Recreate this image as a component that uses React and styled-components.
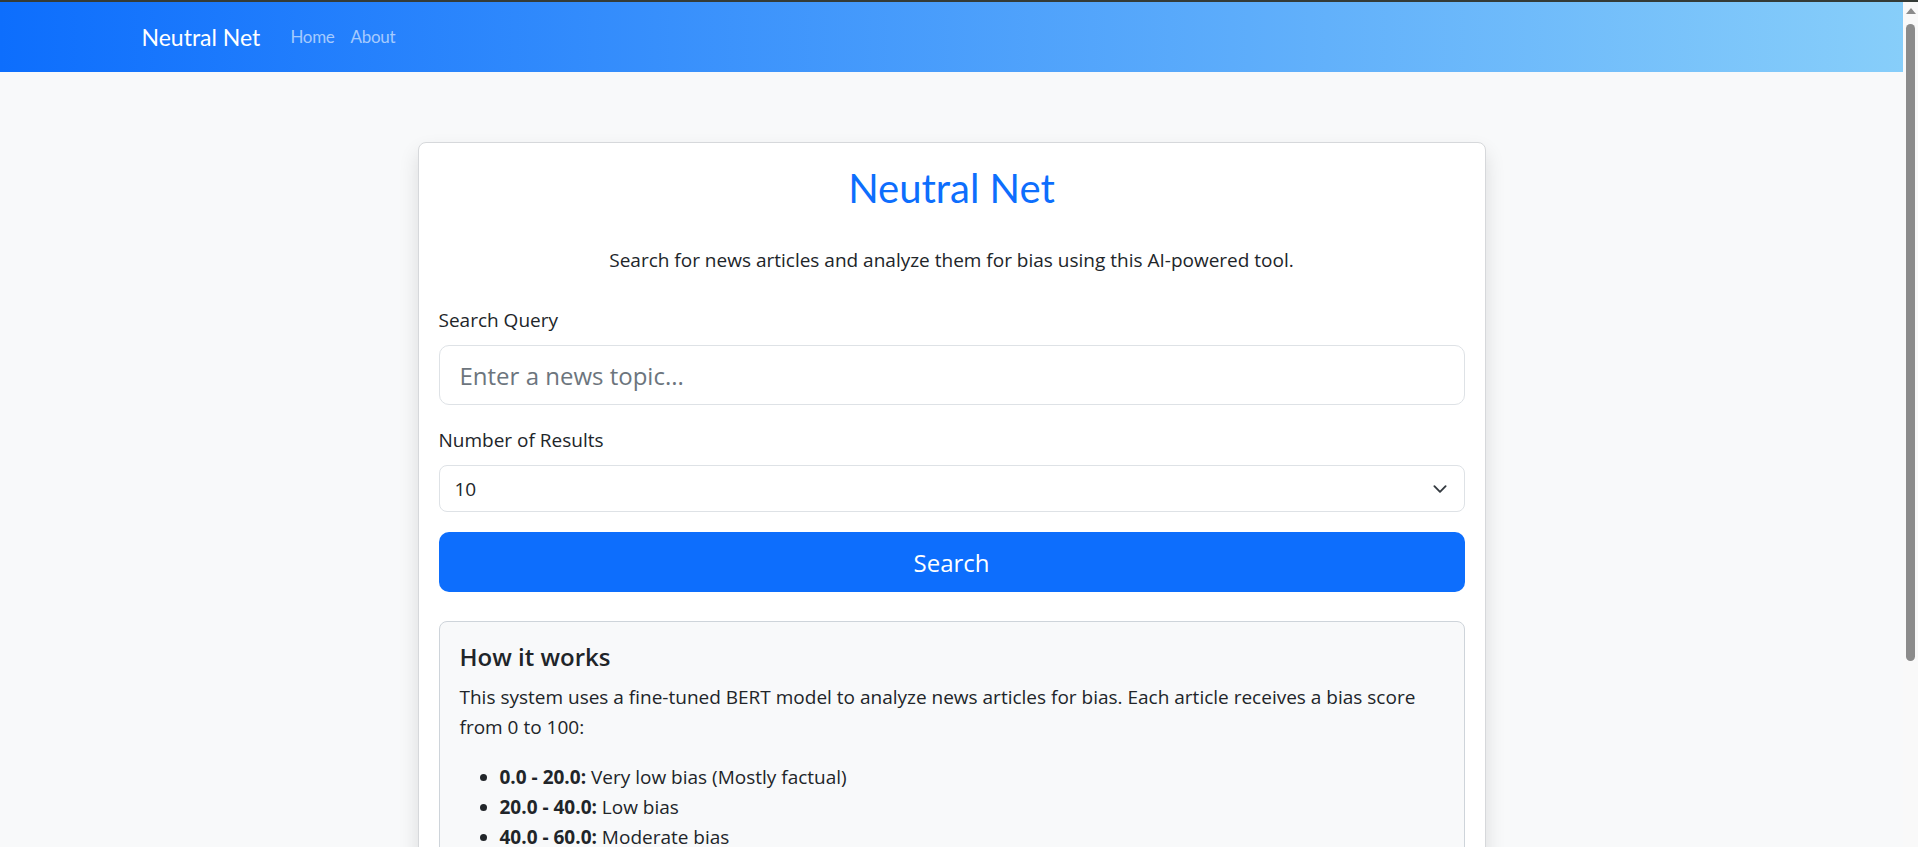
import React, { useState } from 'react';
import styled, { createGlobalStyle } from 'styled-components';

const GlobalStyle = createGlobalStyle`
    * {
        box-sizing: border-box;
    }
    html, body {
        margin: 0;
        padding: 0;
        overflow: hidden;
    }
    body {
        background-color: #f8f9fa;
        color: #212529;
        font-family: 'Segoe UI', 'Open Sans', 'Noto Sans', sans-serif;
        font-size: 19px;
        line-height: 30px;
    }
`;

const Window = styled.div`
    display: flex;
    height: 100vh;
    border-top: 2px solid #343b37;
`;

const Viewport = styled.div`
    flex: 1;
    min-width: 0;
    overflow-y: auto;
    scrollbar-width: none;

    &::-webkit-scrollbar {
        display: none;
    }
`;

const ScrollRail = styled.div`
    width: 15px;
    flex-shrink: 0;
    background: #f9f9f9;
    display: flex;
    flex-direction: column;
    align-items: center;
    padding-top: 6px;
`;

const ScrollArrow = styled.div`
    width: 0;
    height: 0;
    border-left: 5px solid transparent;
    border-right: 5px solid transparent;
    border-bottom: 6px solid #8b8b8b;
    margin-bottom: 10px;
`;

const ScrollThumb = styled.div`
    width: 9px;
    height: 637px;
    border-radius: 5px;
    background: #8b8b8b;
`;

const Navbar = styled.nav`
    height: 70px;
    background: linear-gradient(90deg, #0d6efd 0%, #87cefa 100%);
    display: flex;
    align-items: center;
`;

const NavInner = styled.div`
    width: 1650px;
    margin: 0 auto;
    padding: 0 15px;
    display: flex;
    align-items: center;
`;

const Brand = styled.a`
    font-family: 'Lato', sans-serif;
    font-size: 23px;
    color: #ffffff;
    margin-right: 22px;
    text-decoration: none;
`;

const NavLink = styled.a`
    font-family: 'Lato', sans-serif;
    font-size: 17px;
    letter-spacing: -0.3px;
    color: rgba(255, 255, 255, 0.6);
    padding: 0 8px;
    text-decoration: none;
`;

const Main = styled.main`
    display: flex;
    justify-content: center;
    padding: 70px 0 140px;
`;

const Card = styled.div`
    width: 1068px;
    background: #ffffff;
    border: 1px solid #d6d8db;
    border-radius: 8px;
    box-shadow: 0 10px 20px rgba(0, 0, 0, 0.12);
    padding: 20px;
`;

const Title = styled.h1`
    font-family: 'Lato', sans-serif;
    font-weight: 400;
    font-size: 40px;
    line-height: 48px;
    color: #0d6efd;
    text-align: center;
    margin: 1px 0 33px;
`;

const Intro = styled.p`
    text-align: center;
    margin: 0 0 30px;
`;

const Field = styled.div`
    margin-bottom: 20px;
`;

const Label = styled.label`
    display: block;
    margin-bottom: 10px;
`;

const TextInput = styled.input`
    display: block;
    width: 100%;
    height: 60px;
    padding: 10px 20px;
    font-family: inherit;
    font-size: 24px;
    color: #212529;
    background: #ffffff;
    border: 1px solid #dee2e6;
    border-radius: 10px;
    outline: none;

    &::placeholder {
        color: #6c757d;
    }
`;

const SelectWrap = styled.div`
    position: relative;
`;

const Select = styled.select`
    display: block;
    width: 100%;
    height: 47px;
    padding: 7px 45px 7px 15px;
    font-family: inherit;
    font-size: 19px;
    color: #212529;
    background: #ffffff;
    border: 1px solid #dee2e6;
    border-radius: 8px;
    appearance: none;
    outline: none;
`;

const Chevron = styled.svg`
    position: absolute;
    right: 15px;
    top: 50%;
    transform: translateY(-50%);
    pointer-events: none;
`;

const SearchButton = styled.button`
    display: block;
    width: 100%;
    height: 60px;
    font-family: inherit;
    font-size: 24px;
    color: #ffffff;
    background: #0d6efd;
    border: none;
    border-radius: 10px;
    cursor: pointer;
`;

const InfoBox = styled.div`
    margin-top: 29px;
    background: #f8f9fa;
    border: 1px solid #ced4da;
    border-radius: 8px;
    padding: 20px;
`;

const InfoTitle = styled.h5`
    font-size: 24px;
    font-weight: 600;
    line-height: 30px;
    margin: 0 0 10px;
`;

const InfoText = styled.p`
    margin: 0 0 20px;
`;

const List = styled.ul`
    margin: 0 0 20px;
    padding-left: 40px;
`;

const ranges = [
    ['0.0 - 20.0:', 'Very low bias (Mostly factual)'],
    ['20.0 - 40.0:', 'Low bias'],
    ['40.0 - 60.0:', 'Moderate bias'],
    ['60.0 - 80.0:', 'High bias'],
    ['80.0 - 100.0:', 'Very high bias (Mostly opinion)'],
];

export default function App() {
    const [query, setQuery] = useState('');
    const [count, setCount] = useState('10');

    return (
        <>
            <GlobalStyle />
            <Window>
                <Viewport>
                    <Navbar>
                        <NavInner>
                            <Brand href="#">Neutral Net</Brand>
                            <NavLink href="#">Home</NavLink>
                            <NavLink href="#">About</NavLink>
                        </NavInner>
                    </Navbar>
                    <Main>
                        <Card>
                            <Title>Neutral Net</Title>
                            <Intro>
                                Search for news articles and analyze them for bias using this AI-powered tool.
                            </Intro>
                            <Field>
                                <Label htmlFor="query">Search Query</Label>
                                <TextInput
                                    id="query"
                                    placeholder="Enter a news topic..."
                                    value={query}
                                    onChange={(e) => setQuery(e.target.value)}
                                />
                            </Field>
                            <Field>
                                <Label htmlFor="count">Number of Results</Label>
                                <SelectWrap>
                                    <Select id="count" value={count} onChange={(e) => setCount(e.target.value)}>
                                        <option value="5">5</option>
                                        <option value="10">10</option>
                                        <option value="20">20</option>
                                        <option value="50">50</option>
                                    </Select>
                                    <Chevron width="20" height="15" viewBox="0 0 16 16">
                                        <path
                                            d="m2 5 6 6 6-6"
                                            fill="none"
                                            stroke="#343a40"
                                            strokeWidth="2"
                                            strokeLinecap="round"
                                            strokeLinejoin="round"
                                        />
                                    </Chevron>
                                </SelectWrap>
                            </Field>
                            <SearchButton>Search</SearchButton>
                            <InfoBox>
                                <InfoTitle>How it works</InfoTitle>
                                <InfoText>
                                    This system uses a fine-tuned BERT model to analyze news articles for bias. Each
                                    article receives a bias score from 0 to 100:
                                </InfoText>
                                <List>
                                    {ranges.map(([range, text]) => (
                                        <li key={range}>
                                            <strong>{range}</strong> {text}
                                        </li>
                                    ))}
                                </List>
                            </InfoBox>
                        </Card>
                    </Main>
                </Viewport>
                <ScrollRail>
                    <ScrollArrow />
                    <ScrollThumb />
                </ScrollRail>
            </Window>
        </>
    );
}
